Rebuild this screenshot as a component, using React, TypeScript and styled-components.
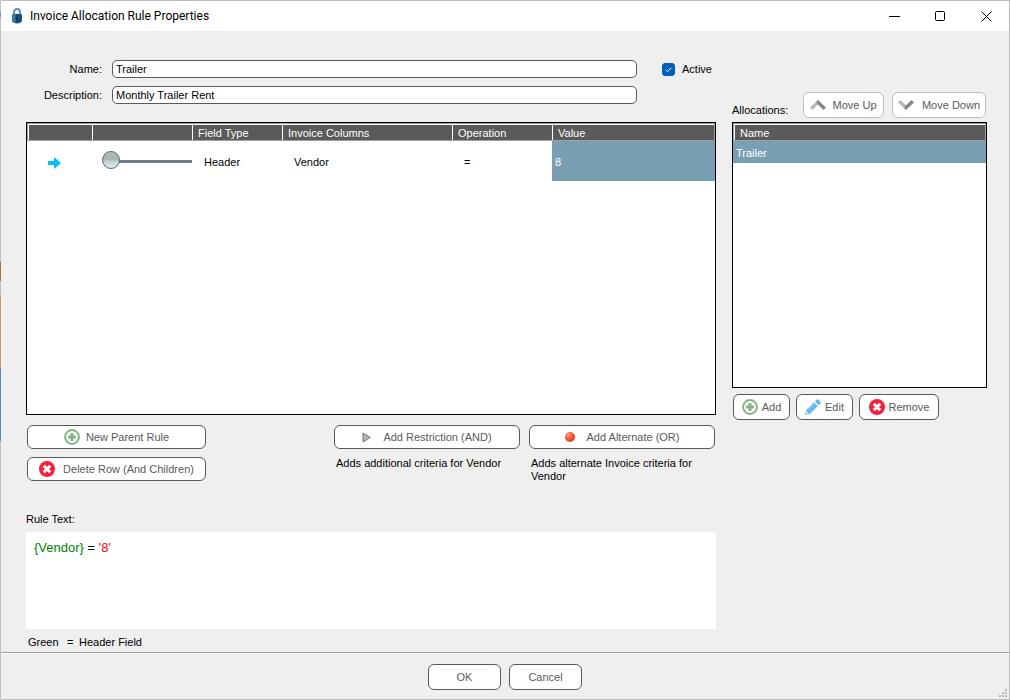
import React, { useState } from "react";
import styled, { createGlobalStyle } from "styled-components";

const GlobalStyle = createGlobalStyle`
  *, *::before, *::after { box-sizing: border-box; }
  body {
    margin: 0;
    background: #efefef;
    font-family: "Liberation Sans", Arial, sans-serif;
    font-size: 11px;
    line-height: 13px;
    color: #000;
  }
  button, input { font: inherit; }
`;

const Window = styled.div`
  position: relative;
  display: flex;
  flex-direction: column;
  min-height: 100vh;
  border: 1px solid #bcbcbc;
  border-left-color: transparent;
  background:
    linear-gradient(#efefef, #efefef) padding-box,
    linear-gradient(
      #c0c0c0 12px, #7396bb 12px 17px, #c0c0c0 17px 262px, #b06a48 262px 281px,
      #c0c0c0 281px 295px, #c89a55 295px 369px, #5a86c4 369px 441px, #c0c0c0 441px
    ) border-box;
`;

const TitleBar = styled.header`
  display: flex;
  align-items: center;
  height: 30px;
  padding-left: 10px;
  background: #fff;
`;

const Title = styled.h1`
  flex: 1;
  margin: 0 0 0 7px;
  font-family: Roboto, "Open Sans", sans-serif;
  font-size: 12px;
  font-weight: 400;
  line-height: 16px;
`;

const CaptionButton = styled.button`
  display: flex;
  align-items: center;
  justify-content: center;
  width: 46px;
  height: 30px;
  padding: 0;
  border: 0;
  background: transparent;
`;

const Content = styled.main`
  flex: 1;
  display: flex;
  gap: 16px;
  padding: 29px 22px 0 25px;
`;

const RuleColumn = styled.section`
  flex: 1;
  min-width: 0;
  display: flex;
  flex-direction: column;
`;

const AllocationColumn = styled.section`
  width: 255px;
  padding-top: 32px;
`;

const Form = styled.div`
  display: grid;
  grid-template-columns: 76px 1fr 54px;
  column-gap: 10px;
  row-gap: 8px;
  align-items: center;
  margin-bottom: 18px;
`;

const FieldLabel = styled.label`
  text-align: right;
`;

const TextInput = styled.input`
  width: calc(100% - 15px);
  height: 18px;
  padding: 0 3px;
  border: 1px solid #5a5a5a;
  border-radius: 5px;
  background: #fff;
  color: #000;
  outline: none;
`;

const CheckLabel = styled.label`
  display: flex;
  align-items: center;
  gap: 7px;
`;

const CheckInput = styled.input`
  appearance: none;
  width: 13px;
  height: 13px;
  margin: 0;
  border: 1px solid #005fb8;
  border-radius: 3px;
  background: #fff;
  &:checked {
    background: #005fb8
      url("data:image/svg+xml,%3Csvg xmlns='http://www.w3.org/2000/svg' viewBox='0 0 11 11'%3E%3Cpath d='M2.5 5.7l2 2 4-4' fill='none' stroke='white'/%3E%3C/svg%3E");
  }
`;

const GridFrame = styled.div<{ $minHeight: number }>`
  min-height: ${(p) => p.$minHeight}px;
  border: 1px solid #000;
  background: #fff;
`;

const Grid = styled.table`
  width: 100%;
  border-collapse: separate;
  border-spacing: 0;
  table-layout: fixed;

  thead tr {
    background: #5a5a5a;
  }
`;

const HeadCell = styled.th`
  height: 18px;
  padding: 2px 0 0 6px;
  border-top: 1px solid #a0a0a0;
  border-bottom: 1px solid #a0a0a0;
  box-shadow: inset 0 1px #fff, inset 1px 0 #fff;
  color: #fff;
  font-weight: 400;
  text-align: left;

  &:first-child {
    border-left: 1px solid #a0a0a0;
  }
  &:last-child {
    border-right: 1px solid #a0a0a0;
  }
`;

const Cell = styled.td<{ $selected?: boolean; $height: number; $indent?: number }>`
  height: ${(p) => p.$height}px;
  padding: 2px 0 0 ${(p) => p.$indent ?? 3}px;
  background: ${(p) => (p.$selected ? "#7b9fb2" : "#fff")};
  color: ${(p) => (p.$selected ? "#fff" : "#000")};
  vertical-align: middle;
`;

const LevelCell = styled(Cell)`
  padding: 0 0 2px 10px;
`;

const MarkerCell = styled(Cell)`
  padding: 3px 0 0 21px;
`;

const LevelSlider = styled.input`
  appearance: none;
  display: block;
  width: 100%;
  height: 18px;
  margin: 0;
  background: linear-gradient(#6f8190, #6f8190) right 0 top 9px / calc(100% - 10px) 3px no-repeat;
  outline: none;
  &::-webkit-slider-thumb {
    appearance: none;
    width: 18px;
    height: 18px;
    border: 1px solid #5d6464;
    border-radius: 50%;
    background: linear-gradient(#b9bfc0 0%, #a8b3b4 45%, #bccbcb 55%, #dcf3f1 100%);
  }
`;

const PushButton = styled.button<{ $width?: number; $height?: number; $gap?: number; $muted?: boolean }>`
  display: flex;
  align-items: center;
  justify-content: center;
  gap: ${(p) => p.$gap ?? 6}px;
  width: ${(p) => (p.$width ? `${p.$width}px` : "100%")};
  height: ${(p) => p.$height ?? 26}px;
  padding: 0;
  border: 1px solid ${(p) => (p.$muted ? "#bdbdbd" : "#5a5a5a")};
  border-radius: 6px;
  background: #fff;
  color: #5a5a5a;
  white-space: nowrap;
  svg { flex: none; }
`;

const RuleActions = styled.div`
  display: grid;
  grid-template-columns: 179px 1fr 186px 186px;
  column-gap: 9px;
  padding: 10px 1px 0;
`;

const ActionStack = styled.div`
  display: flex;
  flex-direction: column;
  gap: 8px;
`;

const CriteriaAction = styled(ActionStack)<{ $column: number }>`
  grid-column: ${(p) => p.$column};
`;

const Hint = styled.p`
  margin: 0;
  padding: 0 2px;
`;

const RuleTextLabel = styled.div`
  margin: 30px 0 6px;
`;

const RuleText = styled.div`
  min-height: 97px;
  padding: 8px;
  background: #fff;
  font-size: 13px;
  line-height: 16px;
`;

const FieldToken = styled.span`
  color: #008000;
`;

const ValueToken = styled.span`
  color: #f00;
`;

const Legend = styled.div`
  display: flex;
  padding: 7px 2px 3px;
`;

const LegendName = styled.span`
  width: 39px;
`;

const LegendSign = styled.span`
  width: 12px;
`;

const AllocationHeader = styled.div`
  display: flex;
  align-items: center;
  gap: 8px;
  padding: 0 1px 4px 0;
`;

const AllocationLabel = styled.span`
  flex: 1;
  padding-top: 11px;
`;

const AllocationFooter = styled.div`
  display: flex;
  gap: 6px;
  padding: 6px 1px;
`;

const DialogFooter = styled.footer`
  display: flex;
  justify-content: center;
  gap: 8px;
  padding: 11px 0 9px;
  border-top: 1px solid #a0a0a0;
  box-shadow: inset 0 1px #fff;
`;

const Grip = styled.svg`
  position: absolute;
  right: 2px;
  bottom: 2px;
`;

const LockIcon = () => (
  <svg width="12" height="16" viewBox="0 0 12 16" aria-hidden="true">
    <path d="M3 7V4a3 3 0 0 1 6 0v3" fill="none" stroke="#5c8aaa" strokeWidth="1.8" />
    <path d="M1 6.5Q6 5 11 6.5V13Q9.500 15.500 6 15.500T1 13Z" fill="#14507e" />
    <path d="M1 6.500Q3 5.800 4.500 5.800V15.300Q2 14.800 1 13Z" fill="#3b7ba4" />
    <path d="M6 8.500a1.200 1.200 0 0 1 .6 2.200V13H5.400v-2.300A1.200 1.200 0 0 1 6 8.500Z" fill="#0a2f50" />
  </svg>
);

const AddIcon = () => (
  <svg width="16" height="16" viewBox="0 0 16 16" aria-hidden="true">
    <circle cx="8" cy="8" r="6.900" fill="#fff" stroke="#86b583" strokeWidth="2" />
    <path d="M8 4v8M4 8h8" stroke="#86b583" strokeWidth="3" />
  </svg>
);

const RemoveIcon = () => (
  <svg width="16" height="16" viewBox="0 0 16 16" aria-hidden="true">
    <circle cx="8" cy="8" r="8" fill="#f8203c" />
    <path d="M4.800 4.800l6.400 6.400M11.200 4.800l-6.400 6.400" stroke="#fff" strokeWidth="3" />
  </svg>
);

const PencilIcon = () => (
  <svg width="16" height="16" viewBox="0 0 16 16" aria-hidden="true">
    <path d="M0 16l1.300-5L9 3.300l3.800 3.800L5 14.800Z" fill="#62b8f0" />
    <path d="M9.900 2.400l1.800-1.800q.8-.8 1.600 0l2.200 2.200q.8.800 0 1.600l-1.800 1.800Z" fill="#62b8f0" />
    <path d="M1.800 12.300l1.900 1.900-2.300.5Z" fill="#fff" />
    <path d="M3.500 10.800L9.500 4.800" stroke="#b5defa" strokeWidth=".7" />
  </svg>
);

const ChevronIcon = ({ down }: { down?: boolean }) => (
  <svg width="16" height="10" viewBox="0 0 16 10" aria-hidden="true">
    <g transform={down ? "matrix(1 0 0 -1 0 10)" : undefined}>
      <path d="M0 7.600L8 0V4.600L2.400 10Z" fill="#b8b8b8" />
      <path d="M6.600 1.300L8 0l8 7.600L13.600 10 6.600 3.600Z" fill="#868686" />
    </g>
  </svg>
);

const PlayIcon = () => (
  <svg width="9" height="11" viewBox="0 0 9 11" aria-hidden="true">
    <path d="M1 1l7.300 4.500L1 10Z" fill="#b4b4b4" stroke="#757575" />
  </svg>
);

const RecordIcon = () => (
  <svg width="10" height="10" viewBox="0 0 10 10" aria-hidden="true">
    <defs>
      <radialGradient id="record" cx=".35" cy=".3" r=".75">
        <stop offset="0" stopColor="#ff9c7c" />
        <stop offset=".6" stopColor="#f8502c" />
        <stop offset="1" stopColor="#d93a1c" />
      </radialGradient>
    </defs>
    <circle cx="5" cy="5" r="5" fill="url(#record)" />
  </svg>
);

const MarkerIcon = styled.svg`
  display: block;
`;

const ArrowIcon = () => (
  <MarkerIcon width="13" height="12" viewBox="0 0 13 12" role="img" aria-label="Current row">
    <path d="M0 4h6V0l7 6-7 6V8H0Z" fill="#00bff3" />
  </MarkerIcon>
);

export default function App() {
  const [name, setName] = useState("Trailer");
  const [description, setDescription] = useState("Monthly Trailer Rent");
  const [active, setActive] = useState(true);

  return (
    <>
      <GlobalStyle />
      <Window>
        <TitleBar>
          <LockIcon />
          <Title>Invoice Allocation Rule Properties</Title>
          <CaptionButton aria-label="Minimize">
            <svg width="11" height="11"><path d="M0 5.500h11" stroke="#000" /></svg>
          </CaptionButton>
          <CaptionButton aria-label="Maximize">
            <svg width="11" height="11"><rect x=".5" y=".5" width="9" height="9" rx="1" fill="none" stroke="#000" /></svg>
          </CaptionButton>
          <CaptionButton aria-label="Close">
            <svg width="11" height="11"><path d="M.5.500l10 10M10.500.500l-10 10" stroke="#000" /></svg>
          </CaptionButton>
        </TitleBar>

        <Content>
          <RuleColumn>
            <Form>
              <FieldLabel htmlFor="rule-name">Name:</FieldLabel>
              <TextInput id="rule-name" value={name} onChange={(e) => setName(e.target.value)} />
              <CheckLabel>
                <CheckInput type="checkbox" checked={active} onChange={(e) => setActive(e.target.checked)} />
                Active
              </CheckLabel>
              <FieldLabel htmlFor="rule-description">Description:</FieldLabel>
              <TextInput
                id="rule-description"
                value={description}
                onChange={(e) => setDescription(e.target.value)}
              />
            </Form>

            <GridFrame $minHeight={293}>
              <Grid>
                <colgroup>
                  <col width="65" />
                  <col width="100" />
                  <col width="90" />
                  <col width="170" />
                  <col width="100" />
                  <col />
                </colgroup>
                <thead>
                  <tr>
                    <HeadCell aria-label="Current row" />
                    <HeadCell aria-label="Level" />
                    <HeadCell>Field Type</HeadCell>
                    <HeadCell>Invoice Columns</HeadCell>
                    <HeadCell>Operation</HeadCell>
                    <HeadCell>Value</HeadCell>
                  </tr>
                </thead>
                <tbody>
                  <tr>
                    <MarkerCell $height={40}><ArrowIcon /></MarkerCell>
                    <LevelCell $height={40}>
                      <LevelSlider type="range" min={0} max={5} defaultValue={0} aria-label="Level" />
                    </LevelCell>
                    <Cell $height={40} $indent={12}>Header</Cell>
                    <Cell $height={40} $indent={12}>Vendor</Cell>
                    <Cell $height={40} $indent={12}>=</Cell>
                    <Cell $height={40} $selected>8</Cell>
                  </tr>
                </tbody>
              </Grid>
            </GridFrame>

            <RuleActions>
              <ActionStack>
                <PushButton $height={24}><AddIcon />New Parent Rule</PushButton>
                <PushButton $height={24} $gap={8}><RemoveIcon />Delete Row (And Children)</PushButton>
              </ActionStack>
              <CriteriaAction $column={3}>
                <PushButton $height={24} $gap={12}><PlayIcon />Add Restriction (AND)</PushButton>
                <Hint>Adds additional criteria for Vendor</Hint>
              </CriteriaAction>
              <CriteriaAction $column={4}>
                <PushButton $height={24} $gap={12}><RecordIcon />Add Alternate (OR)</PushButton>
                <Hint>Adds alternate Invoice criteria for Vendor</Hint>
              </CriteriaAction>
            </RuleActions>

            <RuleTextLabel id="rule-text">Rule Text:</RuleTextLabel>
            <RuleText role="region" aria-labelledby="rule-text">
              <FieldToken>{"{Vendor}"}</FieldToken> = <ValueToken>'8'</ValueToken>
            </RuleText>
            <Legend>
              <LegendName>Green</LegendName>
              <LegendSign>=</LegendSign>
              <span>Header Field</span>
            </Legend>
          </RuleColumn>

          <AllocationColumn>
            <AllocationHeader>
              <AllocationLabel>Allocations:</AllocationLabel>
              <PushButton $width={81} $muted><ChevronIcon />Move Up</PushButton>
              <PushButton $width={94} $gap={8} $muted><ChevronIcon down />Move Down</PushButton>
            </AllocationHeader>
            <GridFrame $minHeight={266}>
              <Grid>
                <thead>
                  <tr><HeadCell>Name</HeadCell></tr>
                </thead>
                <tbody>
                  <tr><Cell $height={22} $selected>Trailer</Cell></tr>
                </tbody>
              </Grid>
            </GridFrame>
            <AllocationFooter>
              <PushButton $width={57} $gap={4}><AddIcon />Add</PushButton>
              <PushButton $width={57} $gap={4}><PencilIcon />Edit</PushButton>
              <PushButton $width={80} $gap={4}><RemoveIcon />Remove</PushButton>
            </AllocationFooter>
          </AllocationColumn>
        </Content>

        <DialogFooter>
          <PushButton $width={73}>OK</PushButton>
          <PushButton $width={73}>Cancel</PushButton>
        </DialogFooter>
        <Grip width="8" height="8" aria-hidden="true">
          <path d="M6 0h2v2h-2zM3 3h2v2h-2zM6 3h2v2h-2zM0 6h2v2h-2zM3 6h2v2h-2zM6 6h2v2h-2z" fill="#bbb" />
        </Grip>
      </Window>
    </>
  );
}
